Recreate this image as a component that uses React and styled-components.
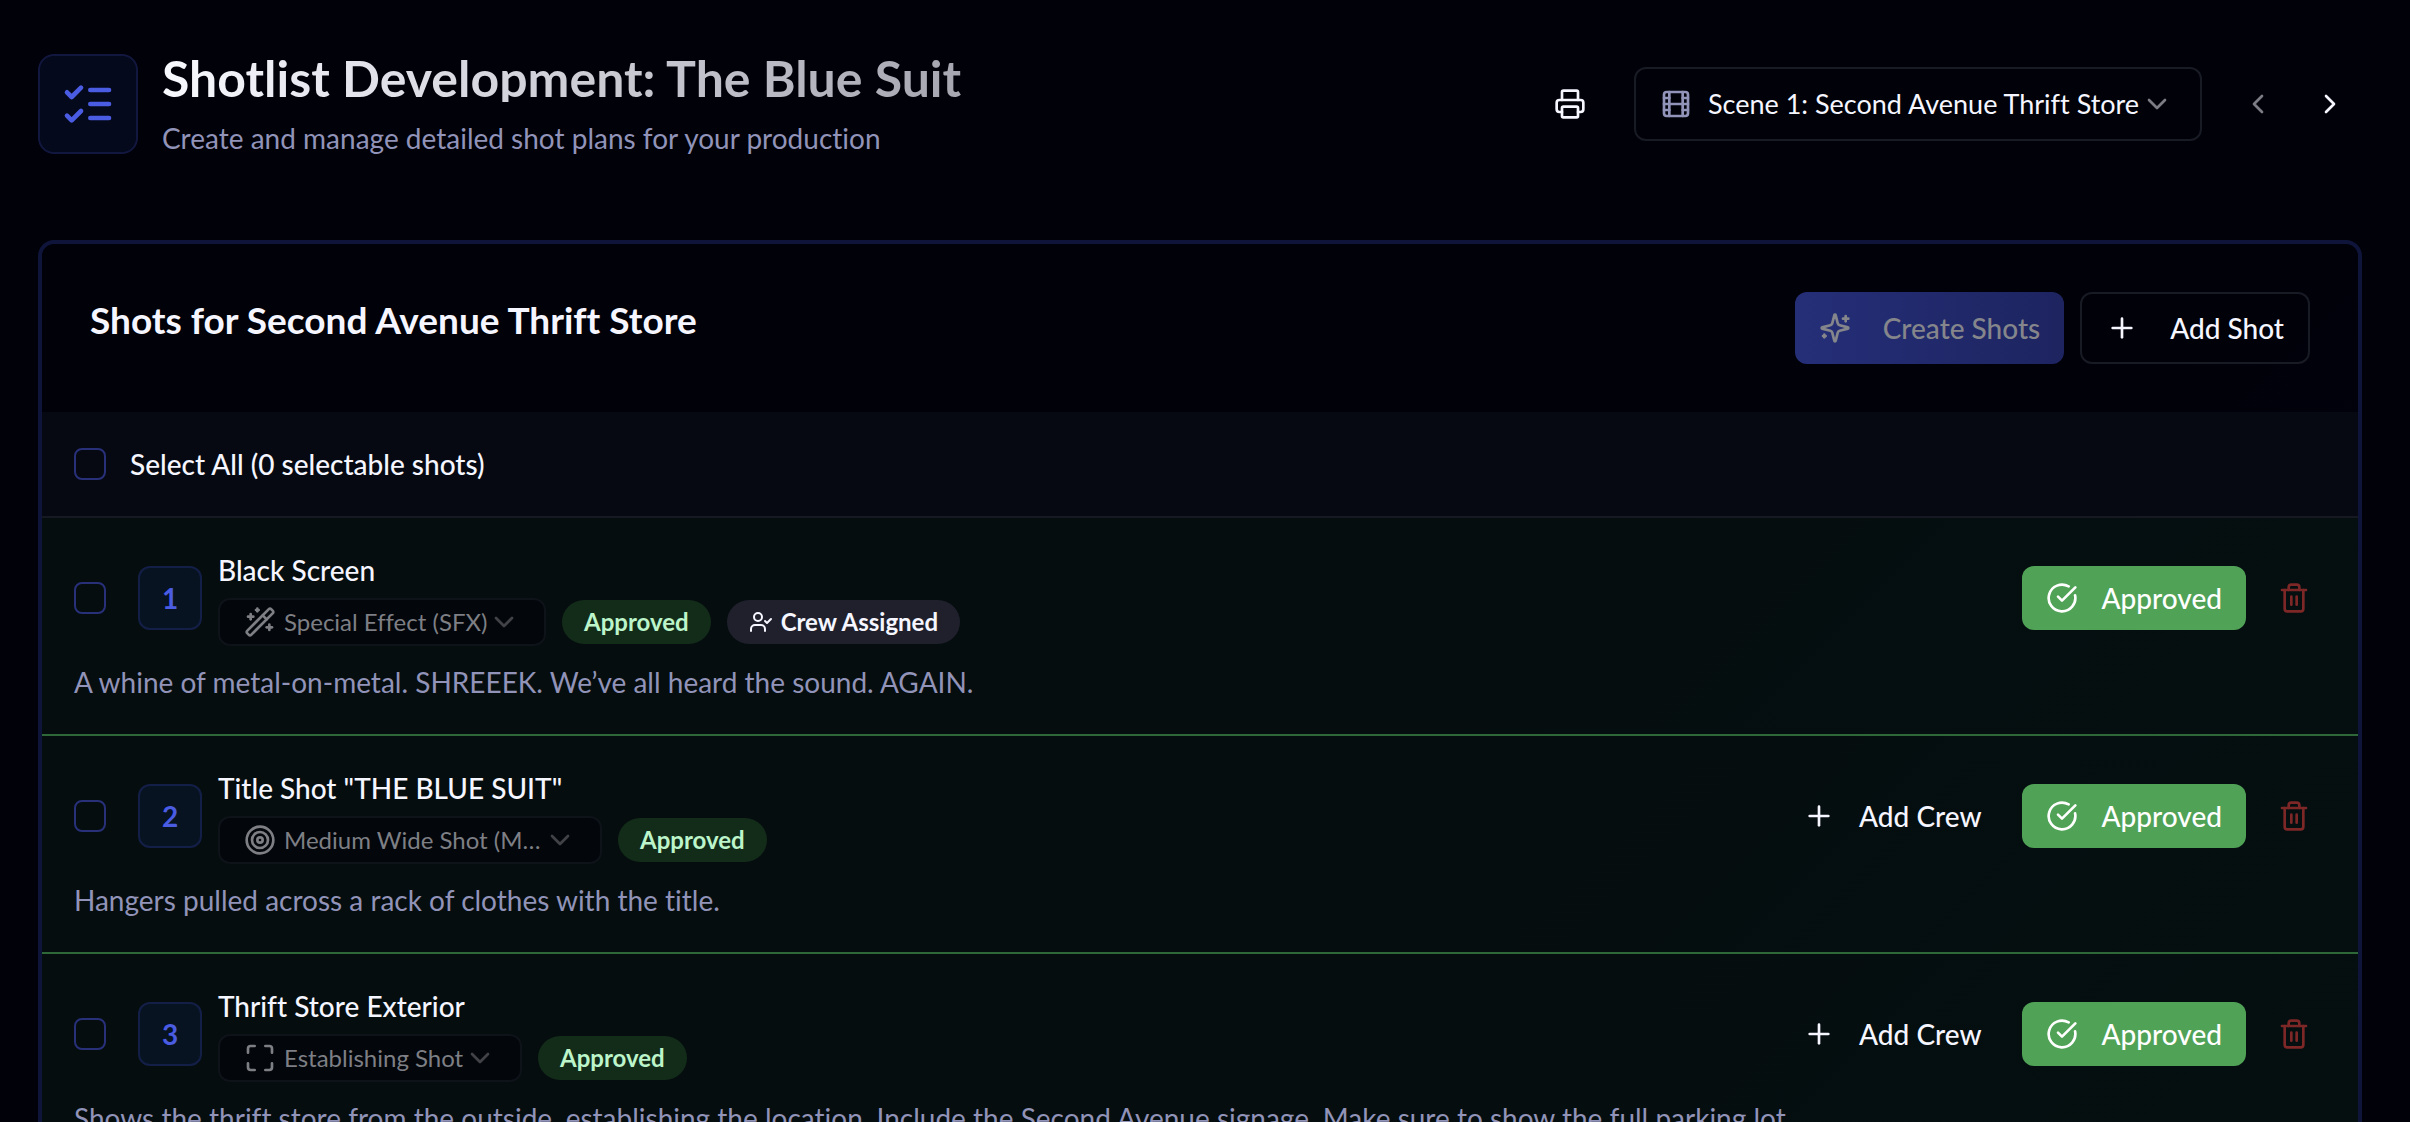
import React from 'react';
import styled, { createGlobalStyle } from 'styled-components';
import {
  ChevronDown,
  ChevronLeft,
  ChevronRight,
  CircleCheckBig,
  Film,
  Maximize,
  Plus,
  Printer,
  Target,
  Trash2,
  UserCheck,
  WandSparkles,
} from 'lucide-react';

const GlobalStyle = createGlobalStyle`
  * {
    box-sizing: border-box;
  }

  body {
    margin: 0;
    background: #000109;
    color: #f5f6ff;
    font-family: 'Lato', sans-serif;
    font-size: 28px;
    font-variant-ligatures: none;
    line-height: 40px;
  }

  button,
  select {
    font: inherit;
    color: inherit;
  }

  svg {
    flex-shrink: 0;
  }
`;

const Page = styled.main`
  height: 100vh;
  padding: 54px 48px 0 38px;
  overflow: hidden;
`;

const Header = styled.header`
  display: flex;
  align-items: center;
  justify-content: space-between;
  margin-bottom: 86px;
`;

const Brand = styled.div`
  display: flex;
  gap: 24px;
`;

const BrandIcon = styled.div`
  display: flex;
  align-items: center;
  justify-content: center;
  width: 100px;
  height: 100px;
  border: 2px solid #11173f;
  border-radius: 16px;
  background: #04091b;
  color: #4a5ce2;
`;

const PageTitle = styled.h1`
  width: fit-content;
  margin: 0 0 20px;
  background: linear-gradient(to right, #f8f8ff, #a5a6b0);
  background-clip: text;
  color: transparent;
  font-size: 50px;
  font-weight: 700;
  line-height: 48px;
`;

const Subtitle = styled.p`
  margin: 0;
  color: #9193b8;
  line-height: 32px;
`;

const HeaderActions = styled.div`
  display: flex;
  align-items: center;
  gap: 8px;
`;

const IconButton = styled.button`
  display: flex;
  align-items: center;
  justify-content: center;
  width: 64px;
  height: 64px;
  padding: 0;
  border: 0;
  border-radius: 12px;
  background: none;
  color: ${(props) => (props.$danger ? '#7d2727' : '#f5f6ff')};

  &:disabled {
    opacity: 0.5;
  }
`;

const SceneField = styled.label`
  display: flex;
  align-items: center;
  width: 568px;
  height: 74px;
  margin: 0 16px 0 24px;
  padding: 0 24px;
  border: 2px solid #181a24;
  border-radius: 12px;
  font-size: 27px;

  svg:first-child {
    margin-right: 16px;
    color: #9193b8;
  }

  svg:last-child {
    opacity: 0.5;
  }
`;

const Select = styled.select`
  min-width: 0;
  padding: 0;
  border: 0;
  outline: 0;
  appearance: none;
  background: none;
  opacity: 1;
  white-space: nowrap;
  text-overflow: ellipsis;
`;

const Card = styled.section`
  border: 4px solid #0f153a;
  border-radius: 16px;
  background: linear-gradient(135deg, #000109 70%, #02030f);
  overflow: hidden;
`;

const CardHeader = styled.div`
  display: flex;
  align-items: flex-start;
  justify-content: space-between;
  padding: 48px;
`;

const CardTitle = styled.h2`
  margin: 0;
  font-size: 37px;
  font-weight: 700;
  line-height: 56px;
`;

const Actions = styled.div`
  display: flex;
  align-items: center;
  gap: 16px;
`;

const Button = styled.button`
  display: flex;
  align-items: center;
  gap: ${(props) => (props.$large ? 32 : 24)}px;
  height: ${(props) => (props.$large ? 72 : 64)}px;
  padding: 0 24px;
  border: 0;
  border-radius: 12px;
  background: none;
  font-weight: 500;
  white-space: nowrap;
`;

const PrimaryButton = styled(Button)`
  background: linear-gradient(to right, #252f78, #1d2460);
  color: #85868b;
`;

const OutlineButton = styled(Button)`
  border: 2px solid #181a24;
`;

const ApproveButton = styled(Button)`
  background: #4fa256;
  color: #fff;
`;

const SelectAllBar = styled.label`
  display: flex;
  align-items: center;
  gap: 24px;
  padding: 32px;
  border-bottom: 2px solid #171922;
  background: #060912;
  font-weight: 500;
`;

const Checkbox = styled.input`
  flex-shrink: 0;
  width: 32px;
  height: 32px;
  margin: 0;
  border: 2px solid #273078;
  border-radius: 8px;
  appearance: none;

  &:checked {
    background: #4a5ce2;
  }
`;

const ShotList = styled.ul`
  margin: 0;
  padding: 0;
  list-style: none;
`;

const ShotRow = styled.li`
  padding: 32px;
  border-bottom: 2px solid #2e6838;
  background: linear-gradient(135deg, #050d0f 60%, #050f10);
`;

const ShotTop = styled.div`
  display: flex;
  align-items: center;
`;

const ShotNumber = styled.div`
  display: flex;
  align-items: center;
  justify-content: center;
  width: 64px;
  height: 64px;
  margin: 0 16px 0 32px;
  border: 2px solid #141f48;
  border-radius: 12px;
  background: #071321;
  color: #4a5ce2;
  font-weight: 700;
`;

const ShotInfo = styled.div`
  display: flex;
  flex: 1;
  flex-direction: column;
  gap: 8px;
`;

const ShotTitle = styled.h3`
  margin: 0;
  font-size: 28px;
  font-weight: 500;
`;

const ShotMeta = styled.div`
  display: flex;
  align-items: center;
  gap: 16px;
`;

const TypeField = styled.label`
  display: flex;
  align-items: center;
  max-width: 384px;
  height: 48px;
  padding: 0 24px;
  border: 2px solid #0e1219;
  border-radius: 12px;
  background: #03060b;
  color: #7d7f84;
  font-size: 24px;

  svg:first-child {
    margin-right: 8px;
  }

  svg:last-child {
    opacity: 0.5;
  }
`;

const Badge = styled.span`
  display: flex;
  align-items: center;
  gap: 8px;
  height: 44px;
  padding: 0 22px;
  border-radius: 22px;
  background: ${(props) => (props.$approved ? '#132c19' : '#1f202c')};
  color: ${(props) => (props.$approved ? '#bdf5cb' : '#f5f6ff')};
  font-size: 24px;
  font-weight: 700;
`;

const Description = styled.p`
  margin: 16px 0 0;
  color: #9193b8;
`;

const shots = [
  {
    number: 1,
    title: 'Black Screen',
    type: 'Special Effect (SFX)',
    icon: WandSparkles,
    crew: true,
    description:
      'A whine of metal-on-metal. SHREEEK. We’ve all heard the sound. AGAIN.',
  },
  {
    number: 2,
    title: 'Title Shot "THE BLUE SUIT"',
    type: 'Medium Wide Shot (MWS / Cowboy)',
    icon: Target,
    crew: false,
    description: 'Hangers pulled across a rack of clothes with the title.',
  },
  {
    number: 3,
    title: 'Thrift Store Exterior',
    type: 'Establishing Shot',
    icon: Maximize,
    crew: false,
    description:
      'Shows the thrift store from the outside, establishing the location. Include the Second Avenue signage. Make sure to show the full parking lot.',
  },
];

// Checks on lines 1 and 3 of an evenly spaced list
function ChecklistIcon() {
  return (
    <svg
      width="56"
      height="56"
      viewBox="0 0 24 24"
      fill="none"
      stroke="currentColor"
      strokeWidth="2"
      strokeLinecap="round"
      strokeLinejoin="round"
    >
      <path d="m3 17 2 2 4-4" />
      <path d="m3 7 2 2 4-4" />
      <path d="M13 6h8" />
      <path d="M13 12h8" />
      <path d="M13 18h8" />
    </svg>
  );
}

function SparklesIcon() {
  return (
    <svg
      width="32"
      height="32"
      viewBox="0 0 24 24"
      fill="none"
      stroke="currentColor"
      strokeWidth="2"
      strokeLinecap="round"
      strokeLinejoin="round"
    >
      <path d="M9.937 15.5A2 2 0 0 0 8.5 14.063l-6.135-1.582a.5.5 0 0 1 0-.962L8.5 9.936A2 2 0 0 0 9.937 8.5l1.582-6.135a.5.5 0 0 1 .963 0L14.063 8.5A2 2 0 0 0 15.5 9.937l6.135 1.581a.5.5 0 0 1 0 .964L15.5 14.063a2 2 0 0 0-1.437 1.437l-1.582 6.135a.5.5 0 0 1-.963 0z" />
      <path d="M20 3v4" />
      <path d="M22 5h-4" />
      <path d="M4 17v2" />
      <path d="M5 18H3" />
    </svg>
  );
}

function Shot({ shot }) {
  const TypeIcon = shot.icon;
  return (
    <ShotRow>
      <ShotTop>
        <Checkbox type="checkbox" aria-label={'Select ' + shot.title} />
        <ShotNumber>{shot.number}</ShotNumber>
        <ShotInfo>
          <ShotTitle>{shot.title}</ShotTitle>
          <ShotMeta>
            <TypeField>
              <TypeIcon size={32} />
              <Select disabled aria-label="Shot type">
                <option>{shot.type}</option>
              </Select>
              <ChevronDown size={32} />
            </TypeField>
            <Badge $approved>Approved</Badge>
            {shot.crew && (
              <Badge>
                <UserCheck size={24} />
                Crew Assigned
              </Badge>
            )}
          </ShotMeta>
        </ShotInfo>
        <Actions>
          {!shot.crew && (
            <Button type="button">
              <Plus size={32} />
              Add Crew
            </Button>
          )}
          <ApproveButton type="button">
            <CircleCheckBig size={32} />
            Approved
          </ApproveButton>
          <IconButton type="button" $danger aria-label="Delete shot">
            <Trash2 size={32} />
          </IconButton>
        </Actions>
      </ShotTop>
      <Description>{shot.description}</Description>
    </ShotRow>
  );
}

class App extends React.Component {
  render() {
    return (
      <Page>
        <GlobalStyle />
        <Header>
          <Brand>
            <BrandIcon>
              <ChecklistIcon />
            </BrandIcon>
            <div>
              <PageTitle>Shotlist Development: The Blue Suit</PageTitle>
              <Subtitle>
                Create and manage detailed shot plans for your production
              </Subtitle>
            </div>
          </Brand>
          <HeaderActions>
            <IconButton type="button" aria-label="Print">
              <Printer size={32} />
            </IconButton>
            <SceneField>
              <Film size={32} />
              <Select aria-label="Scene">
                <option>Scene 1: Second Avenue Thrift Store</option>
              </Select>
              <ChevronDown size={32} />
            </SceneField>
            <IconButton type="button" disabled aria-label="Previous scene">
              <ChevronLeft size={32} />
            </IconButton>
            <IconButton type="button" aria-label="Next scene">
              <ChevronRight size={32} />
            </IconButton>
          </HeaderActions>
        </Header>
        <Card>
          <CardHeader>
            <CardTitle>Shots for Second Avenue Thrift Store</CardTitle>
            <Actions>
              <PrimaryButton type="button" $large disabled>
                <SparklesIcon />
                Create Shots
              </PrimaryButton>
              <OutlineButton type="button" $large>
                <Plus size={32} />
                Add Shot
              </OutlineButton>
            </Actions>
          </CardHeader>
          <SelectAllBar>
            <Checkbox type="checkbox" />
            Select All (0 selectable shots)
          </SelectAllBar>
          <ShotList>
            {shots.map((shot) => (
              <Shot key={shot.number} shot={shot} />
            ))}
          </ShotList>
        </Card>
      </Page>
    );
  }
}

export default App;
